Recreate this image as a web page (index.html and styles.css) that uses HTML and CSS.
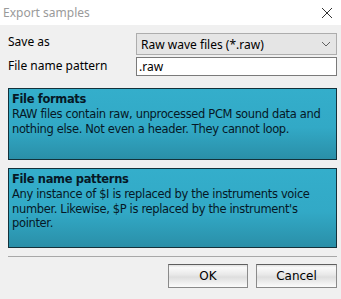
FILE: index.html
```html
<!DOCTYPE html>
<html lang="en">
<head>
    <meta charset="UTF-8">
    <title>Export samples</title>
    <link rel="stylesheet" href="styles.css">
</head>
<body>

    <div class="titlebar">
        <span class="title">Export samples</span>
        <svg class="close" width="12" height="12" viewBox="0 0 12 12">
            <path d="M1 1 L11 11 M11 1 L1 11" stroke="#333" stroke-width="1" fill="none"/>
        </svg>
    </div>

    <div class="content">
        <div class="form-row">
            <label class="label">Save as</label>
            <div class="combo">
                <span>Raw wave files (*.raw)</span>
                <svg width="10" height="6" viewBox="0 0 10 6">
                    <path d="M1 1 L5 5 L9 1" stroke="#606060" stroke-width="1" fill="none"/>
                </svg>
            </div>
        </div>
        <div class="form-row">
            <label class="label">File name pattern</label>
            <div class="textbox">.raw</div>
        </div>

        <div class="info info-formats">
            <h3>File formats</h3>
            <p>RAW files contain raw, unprocessed PCM sound data and nothing else. Not even a header. They cannot loop.</p>
        </div>

        <div class="info info-patterns">
            <h3>File name patterns</h3>
            <p>Any instance of $I is replaced by the instruments voice number. Likewise, $P is replaced by the instrument's pointer.</p>
        </div>

        <hr class="separator">

        <div class="buttons">
            <button class="btn btn-ok">OK</button>
            <button class="btn btn-cancel">Cancel</button>
        </div>
    </div>

    <div class="bottom-edge"></div>

</body>
</html>
```

FILE: styles.css
```css
body {
    margin: 0;
    width: 341px;
    height: 299px;
    overflow: hidden;
    background: #f0f0f0;
    font-family: 'Noto Sans', 'Open Sans', sans-serif;
    font-size: 12px;
    color: #000;
}

.titlebar {
    height: 25px;
    background: #fff;
    display: flex;
    align-items: center;
    justify-content: space-between;
    padding: 0 8px 0 3px;
}

.title {
    color: #9a9a9a;
    font-size: 12px;
}

.content {
    padding: 8px 4px 0 8px;
    height: 272px;
}

.form-row {
    display: grid;
    grid-template-columns: 128px 201px;
    align-items: center;
    margin-bottom: 2px;
}

.label {
    line-height: 14px;
    align-self: start;
    padding-top: 2px;
}

.combo {
    box-sizing: border-box;
    height: 22px;
    border: 1px solid #adadad;
    background: #e5e5e5;
    display: flex;
    align-items: center;
    justify-content: space-between;
    padding: 0 5px 0 4px;
}

.textbox {
    box-sizing: border-box;
    height: 19px;
    border: 1px solid #7a7a7a;
    background: #fff;
    padding: 0 2px;
    line-height: 17px;
}

.info {
    box-sizing: border-box;
    border: 1px solid #14313a;
    background: linear-gradient(to bottom, #34aecb 0%, #32a9c6 55%, #2a8fa8 100%);
    padding: 2px 3px;
    color: #061826;
    font-family: 'DejaVu Sans', Verdana, sans-serif;
    font-size: 11.5px;
    letter-spacing: -0.35px;
    line-height: 14.5px;
}

.info h3 {
    margin: 0;
    font-size: 11.5px;
    font-weight: bold;
    line-height: 16px;
}

.info p {
    margin: 0;
}

.info-formats {
    margin-top: 12px;
    height: 72px;
}

.info-patterns {
    margin-top: 8px;
    height: 80px;
}

.separator {
    margin: 8px 0 0 0;
    border: none;
    border-top: 1px solid #a8a8a8;
}

.buttons {
    display: flex;
    justify-content: flex-end;
    gap: 8px;
    margin-top: 7px;
}

.btn {
    box-sizing: border-box;
    height: 24px;
    border: 1px solid #8a8a8a;
    border-top-color: #5e5e5e;
    background: linear-gradient(to bottom, #e0e0e0 0%, #fafafa 12%, #e8e8e8 45%, #dedede 55%, #f2f2f2 85%, #fbfbfb 100%);
    font-family: 'DejaVu Sans', Verdana, sans-serif;
    font-size: 12px;
    color: #000;
    padding: 0;
}

.btn-ok {
    width: 80px;
}

.btn-cancel {
    width: 81px;
}

.bottom-edge {
    height: 2px;
    background: linear-gradient(to right, #a0a0a0 85px, #303030 85px, #303030 230px, #a0a0a0 230px, #a0a0a0 245px, #101010 245px);
}
```
